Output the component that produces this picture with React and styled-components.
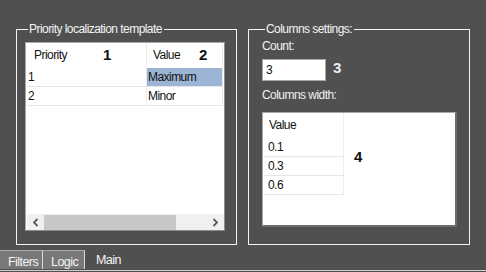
import styled, { createGlobalStyle } from "styled-components";

const GlobalStyle = createGlobalStyle`
  html, body {
    margin: 0;
    padding: 0;
    background: #505050;
  }
  * {
    box-sizing: border-box;
  }
`;

const Page = styled.div`
  position: relative;
  width: 486px;
  height: 272px;
  background: #505050;
  display: flex;
  flex-direction: column;
  font-family: "Liberation Sans", Arial, sans-serif;
  font-size: 12px;
  letter-spacing: -0.55px;
  color: #f2f2f2;
  overflow: hidden;
`;

const Content = styled.div`
  height: 251px;
  display: flex;
  gap: 11px;
  padding: 22px 0 0 16px;
`;

const Group = styled.fieldset`
  margin: 0;
  width: ${(p) => p.$width}px;
  height: 223px;
  border: 1px solid #f4f4f4;
  padding: ${(p) => (p.$inner ? "3px 12px 0 13px" : "6px 0 0 8px")};
  display: flex;
  flex-direction: column;
`;

const Legend = styled.legend`
  margin-left: 3px;
  padding: 0 2px 0 1px;
  line-height: 14px;
  color: #f4f4f4;
`;

const ListBox = styled.div`
  width: ${(p) => p.$width}px;
  height: ${(p) => p.$height}px;
  background: #ffffff;
  border-top: 1px solid #a8a8a8;
  border-left: 1px solid #a8a8a8;
  border-right: ${(p) => (p.$dark ? "2px solid #6c6c6c" : "1px solid #8c8c8c")};
  border-bottom: ${(p) => (p.$dark ? "2px solid #6c6c6c" : "1px solid #8c8c8c")};
  display: flex;
  flex-direction: column;
  color: #111;
`;

const Grid = styled.div`
  display: grid;
  grid-template-columns: ${(p) => p.$cols};
  margin-left: 1px;
  flex: 1;
  align-content: start;
`;

const HeadCell = styled.div`
  height: 25px;
  line-height: 25px;
  padding-left: ${(p) => p.$pad ?? 6}px;
  border-right: 1px solid #ececec;
`;

const Cell = styled.div`
  height: 19px;
  line-height: 18px;
  padding-left: ${(p) => p.$pad ?? 1}px;
  border-bottom: 1px solid #e6e6e6;
  border-right: 1px solid #ececec;
  background: ${(p) => (p.$selected ? "#9db5d5" : "transparent")};
`;

const Marker = styled.span`
  position: absolute;
  left: ${(p) => p.$x}px;
  top: ${(p) => p.$y}px;
  font-family: "Liberation Sans", Arial, sans-serif;
  font-weight: bold;
  font-size: 15px;
  line-height: 15px;
  letter-spacing: 0;
  color: ${(p) => (p.$light ? "#ececec" : "#111")};
`;

const ScrollBar = styled.div`
  height: 16px;
  background: #f0f0f0;
  display: flex;
  align-items: center;
  margin-left: 1px;
`;

const ScrollArrow = styled.div`
  width: 17px;
  height: 16px;
  display: flex;
  align-items: center;
  justify-content: center;
`;

const ScrollThumb = styled.div`
  width: 132px;
  height: 15px;
  background: #c8c8c8;
`;

const ScrollTrack = styled.div`
  flex: 1;
`;

const Label = styled.div`
  line-height: 14px;
  height: 14px;
  margin-bottom: ${(p) => p.$gap}px;
`;

const InputRow = styled.div`
  display: flex;
  align-items: center;
  margin-bottom: 7px;
`;

const TextInput = styled.div`
  width: 64px;
  height: 22px;
  background: #fff;
  border: 1px solid #a8a8a8;
  color: #111;
  line-height: 20px;
  padding-left: 3px;
`;

const TabBar = styled.div`
  height: 21px;
  display: flex;
  align-items: flex-start;
  border-bottom: 1px solid #cfcfcf;
  margin-bottom: 1px;
`;

const Tab = styled.div`
  height: 19px;
  width: ${(p) => (p.$width ? `${p.$width}px` : "auto")};
  padding-left: ${(p) => (p.$active ? 11 : 8)}px;
  background: ${(p) => (p.$active ? "transparent" : "#787878")};
  border-top: ${(p) => (p.$active ? "none" : "1px solid #a8a8a8")};
  border-right: ${(p) => (p.$active ? "none" : "1px solid #d8d8d8")};
  line-height: ${(p) => (p.$active ? "20px" : "22px")};
  color: #f4f4f4;
  font-size: 12.5px;
`;

const Chevron = ({ dir }) => (
  <svg width="7" height="9" viewBox="0 0 7 9">
    <path
      d={dir === "left" ? "M5.5 1 L2 4.5 L5.5 8" : "M1.5 1 L5 4.5 L1.5 8"}
      fill="none"
      stroke="#5a5a5a"
      strokeWidth="1.8"
    />
  </svg>
);

const priorities = [
  { priority: "1", value: "Maximum", selected: true },
  { priority: "2", value: "Minor" },
];

const widths = ["0.1", "0.3", "0.6"];

export default function App() {
  return (
    <Page>
      <GlobalStyle />
      <Content>
        <Group $width={221}>
          <Legend>Priority localization template</Legend>
          <ListBox $width={200} $height={189}>
            <Grid $cols="120px 76px">
              <HeadCell $pad={7}>Priority</HeadCell>
              <HeadCell $pad={6}>Value</HeadCell>
              {priorities.map((row) => [
                <Cell key={row.priority + "p"}>{row.priority}</Cell>,
                <Cell key={row.priority + "v"} $selected={row.selected}>
                  {row.value}
                </Cell>,
              ])}
            </Grid>
            <ScrollBar>
              <ScrollArrow>
                <Chevron dir="left" />
              </ScrollArrow>
              <ScrollThumb />
              <ScrollTrack />
              <ScrollArrow>
                <Chevron dir="right" />
              </ScrollArrow>
            </ScrollBar>
          </ListBox>
        </Group>

        <Group $width={222} $inner>
          <Legend>Columns settings:</Legend>
          <Label $gap={6}>Count:</Label>
          <InputRow>
            <TextInput>3</TextInput>
          </InputRow>
          <Label $gap={10}>Columns width:</Label>
          <ListBox $width={195} $height={115} $dark>
            <Grid $cols="80px">
              <HeadCell $pad={5}>Value</HeadCell>
              {widths.map((w) => (
                <Cell key={w} $pad={4}>
                  {w}
                </Cell>
              ))}
            </Grid>
          </ListBox>
        </Group>
      </Content>
      <TabBar>
        <Tab $width={43}>Filters</Tab>
        <Tab $width={42}>Logic</Tab>
        <Tab $active>Main</Tab>
      </TabBar>

      <Marker $x={103} $y={47}>1</Marker>
      <Marker $x={199} $y={47}>2</Marker>
      <Marker $x={333} $y={60} $light>3</Marker>
      <Marker $x={354} $y={149}>4</Marker>
    </Page>
  );
}
